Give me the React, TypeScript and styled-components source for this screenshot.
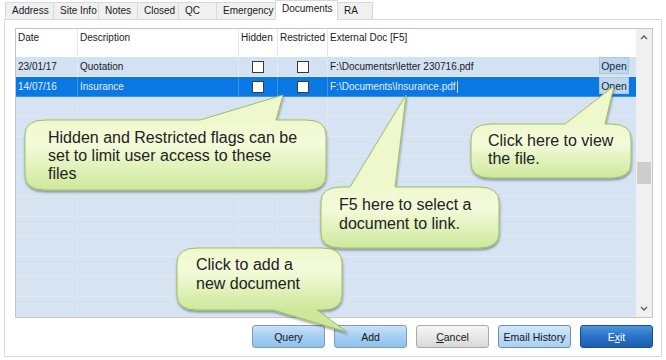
import React from "react";
import styled, { createGlobalStyle, css } from "styled-components";

const GlobalStyle = createGlobalStyle`
  html, body {
    margin: 0;
    padding: 0;
    background: #ffffff;
  }
  body {
    font-family: "Liberation Sans", Arial, sans-serif;
  }
`;

const Screen = styled.div`
  position: relative;
  width: 666px;
  height: 360px;
  overflow: hidden;
  background: #ffffff;
  color: #1e1e1e;
`;

const TabStrip = styled.div`
  display: flex;
  align-items: flex-end;
  height: 19px;
  padding-left: 5px;
  position: relative;
  z-index: 1;
`;

const Tab = styled.div<{ $width: number; $active?: boolean }>`
  box-sizing: border-box;
  width: ${(p) => p.$width}px;
  height: 17px;
  padding: 2px 0 0 6px;
  margin-right: -1px;
  border: 1px solid #d9d9d9;
  border-bottom: none;
  background: #f0f0f0;
  font-size: 10px;
  line-height: 12px;
  color: #1a1a1a;
  white-space: nowrap;

  ${(p) =>
    p.$active &&
    css`
      height: 20px;
      margin-bottom: -1px;
      padding-top: 2px;
      background: #ffffff;
      position: relative;
      z-index: 2;
    `}
`;

const Panel = styled.div`
  box-sizing: border-box;
  width: 658px;
  height: 338px;
  margin-left: 4px;
  border: 1px solid #d9d9d9;
  padding: 8px 8px 0 10px;
  display: flex;
  flex-direction: column;
  background: #ffffff;
`;

const GridBox = styled.div`
  box-sizing: border-box;
  height: 290px;
  border: 1px solid #c4c4c4;
  display: flex;
  background: #d5e3f3;
  overflow: hidden;
`;

const Table = styled.div`
  flex: 1;
  display: flex;
  flex-direction: column;
  overflow: hidden;
`;

type RowKind = "head" | "data" | "selected" | "empty";

const rowColours: Record<RowKind, { bg: string; line: string; text: string }> = {
  head: { bg: "#ffffff", line: "#e6e6e6", text: "#1a1a1a" },
  data: { bg: "#d3e2f2", line: "#e4e9ef", text: "#1a1a1a" },
  selected: { bg: "#0a78e2", line: "#3d93e8", text: "#e4efff" },
  empty: { bg: "#d5e3f3", line: "#e2e7ed", text: "#1a1a1a" },
};

const Row = styled.div<{ $kind: RowKind }>`
  display: grid;
  grid-template-columns: 62px 161px 39px 50px 1fr;
  box-sizing: border-box;
  height: ${(p) => (p.$kind === "head" ? 28 : 20)}px;
  flex-shrink: 0;
  background: ${(p) => rowColours[p.$kind].bg};
  color: ${(p) => rowColours[p.$kind].text};
  font-size: 10px;
`;

const Cell = styled.div<{ $kind: RowKind; $center?: boolean; $last?: boolean }>`
  box-sizing: border-box;
  display: flex;
  align-items: ${(p) => (p.$kind === "head" ? "flex-start" : "center")};
  justify-content: ${(p) => (p.$center ? "center" : "flex-start")};
  padding: ${(p) => (p.$kind === "head" ? "3px 0 0 2px" : "0 0 0 2px")};
  border-right: ${(p) => (p.$last ? "none" : `1px solid ${rowColours[p.$kind].line}`)};
  border-bottom: ${(p) => (p.$kind === "head" ? "none" : `1px solid ${rowColours[p.$kind].line}`)};
  white-space: nowrap;
  overflow: hidden;
  line-height: 12px;
`;

const CheckBox = styled.span`
  box-sizing: border-box;
  width: 12px;
  height: 12px;
  border: 1px solid #3a3a3a;
  background: #ffffff;
  margin-left: -2px;
`;

const OpenButton = styled.span`
  box-sizing: border-box;
  align-self: flex-start;
  height: 17px;
  width: 30px;
  margin-left: auto;
  margin-right: 7px;
  display: flex;
  align-items: center;
  justify-content: center;
  background: #bfd7ee;
  border: 1px solid #aac6e2;
  color: #16263a;
  font-size: 10.5px;
`;

const Caret = styled.span`
  display: inline-block;
  width: 1px;
  height: 12px;
  margin-left: 1px;
  background: #f0d2a6;
`;

const ScrollBar = styled.div`
  width: 16px;
  display: flex;
  flex-direction: column;
  background: #f0f0f0;
`;

const ArrowBox = styled.div`
  height: 17px;
  display: flex;
  align-items: center;
  justify-content: center;
`;

const Track = styled.div`
  flex: 1;
`;

const Thumb = styled.div`
  height: 22px;
  margin: 116px 1px 0 1px;
  background: #cdcdcd;
`;

const Footer = styled.div`
  display: flex;
  justify-content: flex-end;
  gap: 9px;
  margin-top: 7px;
`;

type Variant = "blue" | "gray" | "light" | "primary";

const variants: Record<Variant, ReturnType<typeof css>> = {
  blue: css`
    background: linear-gradient(#c8e2f8, #a7d0f1 48%, #8ec2ec);
    border-color: #7f9cba;
    color: #161616;
  `,
  gray: css`
    background: linear-gradient(#f6f6f6, #e8e8e8 48%, #d8d8d8);
    border-color: #a9a9a9;
    color: #161616;
  `,
  light: css`
    background: linear-gradient(#d3e8f9, #bcdcf6 48%, #a9d1f2);
    border-color: #6e8fae;
    color: #161616;
  `,
  primary: css`
    background: linear-gradient(#4c95de, #2a74c9 48%, #1a5eb0);
    border-color: #1c4e8c;
    color: #ffffff;
  `,
};

const ActionButton = styled.button<{ $variant: Variant }>`
  box-sizing: border-box;
  width: 73px;
  height: 23px;
  padding: 0;
  border: 1px solid;
  border-radius: 3px;
  font-family: "Liberation Sans", Arial, sans-serif;
  font-size: 10.5px;
  ${(p) => variants[p.$variant]}
`;

const Overlay = styled.div`
  position: absolute;
  inset: 0;
  pointer-events: none;
`;

const CalloutLayer = styled.svg`
  position: absolute;
  left: 0;
  top: 0;
`;

const CalloutText = styled.div<{ $x: number; $y: number; $lh: number }>`
  position: absolute;
  left: ${(p) => p.$x}px;
  top: ${(p) => p.$y}px;
  font-family: "Liberation Sans", Arial, sans-serif;
  font-size: 16px;
  line-height: ${(p) => p.$lh}px;
  color: #222222;
  white-space: nowrap;
`;

const tabs = [
  { label: "Address", width: 49 },
  { label: "Site Info", width: 46 },
  { label: "Notes", width: 40 },
  { label: "Closed", width: 42 },
  { label: "QC", width: 39 },
  { label: "Emergency", width: 60 },
  { label: "Documents", width: 63, active: true },
  { label: "RA", width: 36 },
];

const docs = [
  { date: "23/01/17", desc: "Quotation", file: "F:\\Documentsr\\letter 230716.pdf", selected: false },
  { date: "14/07/16", desc: "Insurance", file: "F:\\Documents\\Insurance.pdf", selected: true },
];

interface CalloutSpec {
  id: string;
  body: { x: number; y: number; w: number; h: number };
  tail: { side: "top" | "bottom"; a: number; b: number; tip: [number, number] };
  text: { x: number; y: number; lh: number };
  lines: string[];
}

const callouts: CalloutSpec[] = [
  {
    id: "flags",
    body: { x: 25, y: 120, w: 301, h: 70 },
    tail: { side: "top", a: 200, b: 276, tip: [283, 95] },
    text: { x: 48, y: 129, lh: 18 },
    lines: ["Hidden and Restricted flags can be", "set to limit user access to these", "files"],
  },
  {
    id: "f5",
    body: { x: 321, y: 187, w: 178, h: 61 },
    tail: { side: "top", a: 350, b: 395, tip: [406, 95] },
    text: { x: 339, y: 195, lh: 19 },
    lines: ["F5 here to select a", "document to link."],
  },
  {
    id: "open",
    body: { x: 471, y: 124, w: 160, h: 54 },
    tail: { side: "top", a: 565, b: 605, tip: [614, 86] },
    text: { x: 488, y: 132, lh: 17.5 },
    lines: ["Click here to view", "the file."],
  },
  {
    id: "add",
    body: { x: 177, y: 248, w: 165, h: 62 },
    tail: { side: "bottom", a: 273, b: 317, tip: [347, 332] },
    text: { x: 196, y: 255, lh: 19 },
    lines: ["Click to add a", "new document"],
  },
];

// rounded callout body with its pointer merged into the outline
function calloutPath({ body, tail }: CalloutSpec, r = 20) {
  const { x, y, w, h } = body;
  const R = x + w;
  const B = y + h;
  const rv = Math.min(15, h / 3);
  const [tx, ty] = tail.tip;
  const top =
    tail.side === "top"
      ? `L${tail.a},${y} L${tx},${ty} L${tail.b},${y} L${R - r},${y}`
      : `L${R - r},${y}`;
  const bottom =
    tail.side === "bottom"
      ? `L${tail.b},${B} L${tx},${ty} L${tail.a},${B} L${x + r},${B}`
      : `L${x + r},${B}`;
  return [
    `M${x + r},${y}`,
    top,
    `Q${R},${y} ${R},${y + rv}`,
    `L${R},${B - rv}`,
    `Q${R},${B} ${R - r},${B}`,
    bottom,
    `Q${x},${B} ${x},${B - rv}`,
    `L${x},${y + rv}`,
    `Q${x},${y} ${x + r},${y}`,
    "Z",
  ].join(" ");
}

const Chevron = ({ up }: { up?: boolean }) => (
  <svg width="8" height="5" viewBox="0 0 8 5">
    <path
      d={up ? "M1 4 L4 1 L7 4" : "M1 1 L4 4 L7 1"}
      fill="none"
      stroke="#5a5a5a"
      strokeWidth="1.3"
    />
  </svg>
);

const App: React.FC = () => {
  return (
    <Screen>
      <GlobalStyle />
      <TabStrip>
        {tabs.map((t) => (
          <Tab key={t.label} $width={t.width} $active={t.active}>
            {t.label}
          </Tab>
        ))}
      </TabStrip>

      <Panel>
        <GridBox>
          <Table>
            <Row $kind="head">
              <Cell $kind="head">Date</Cell>
              <Cell $kind="head">Description</Cell>
              <Cell $kind="head">Hidden</Cell>
              <Cell $kind="head">Restricted</Cell>
              <Cell $kind="head" $last>
                External Doc [F5]
              </Cell>
            </Row>
            {docs.map((d) => {
              const kind: RowKind = d.selected ? "selected" : "data";
              return (
                <Row key={d.date} $kind={kind}>
                  <Cell $kind={kind}>{d.date}</Cell>
                  <Cell $kind={kind}>{d.desc}</Cell>
                  <Cell $kind={kind} $center>
                    <CheckBox />
                  </Cell>
                  <Cell $kind={kind} $center>
                    <CheckBox />
                  </Cell>
                  <Cell $kind={kind} $last>
                    {d.file}
                    {d.selected && <Caret />}
                    <OpenButton>Open</OpenButton>
                  </Cell>
                </Row>
              );
            })}
            {Array.from({ length: 11 }).map((_, i) => (
              <Row key={i} $kind="empty">
                <Cell $kind="empty" />
                <Cell $kind="empty" />
                <Cell $kind="empty" />
                <Cell $kind="empty" />
                <Cell $kind="empty" $last />
              </Row>
            ))}
          </Table>
          <ScrollBar>
            <ArrowBox>
              <Chevron up />
            </ArrowBox>
            <Track>
              <Thumb />
            </Track>
            <ArrowBox>
              <Chevron />
            </ArrowBox>
          </ScrollBar>
        </GridBox>

        <Footer>
          <ActionButton $variant="blue">Query</ActionButton>
          <ActionButton $variant="blue">Add</ActionButton>
          <ActionButton $variant="gray">
            <u>C</u>ancel
          </ActionButton>
          <ActionButton $variant="light">Email History</ActionButton>
          <ActionButton $variant="primary">
            E<u>x</u>it
          </ActionButton>
        </Footer>
      </Panel>

      <Overlay>
        <CalloutLayer width="666" height="360" viewBox="0 0 666 360">
          <defs>
            <filter id="callout-shadow" x="-10%" y="-10%" width="120%" height="130%">
              <feDropShadow dx="0.5" dy="2" stdDeviation="1" floodColor="#000000" floodOpacity="0.35" />
            </filter>
            {callouts.map((c) => (
              <linearGradient
                key={c.id}
                id={`fill-${c.id}`}
                gradientUnits="userSpaceOnUse"
                x1="0"
                y1={c.body.y}
                x2="0"
                y2={c.body.y + c.body.h}
              >
                <stop offset="0" stopColor="#eef8cb" />
                <stop offset="0.35" stopColor="#f4fbdb" />
                <stop offset="1" stopColor="#cde89a" />
              </linearGradient>
            ))}
          </defs>
          {callouts.map((c) => (
            <path
              key={c.id}
              d={calloutPath(c)}
              fill={`url(#fill-${c.id})`}
              stroke="#9bbf62"
              strokeWidth="1"
              filter="url(#callout-shadow)"
            />
          ))}
        </CalloutLayer>
        {callouts.map((c) => (
          <CalloutText key={c.id} $x={c.text.x} $y={c.text.y} $lh={c.text.lh}>
            {c.lines.map((l, i) => (
              <React.Fragment key={i}>
                {i > 0 && <br />}
                {l}
              </React.Fragment>
            ))}
          </CalloutText>
        ))}
      </Overlay>
    </Screen>
  );
};

export default App;
